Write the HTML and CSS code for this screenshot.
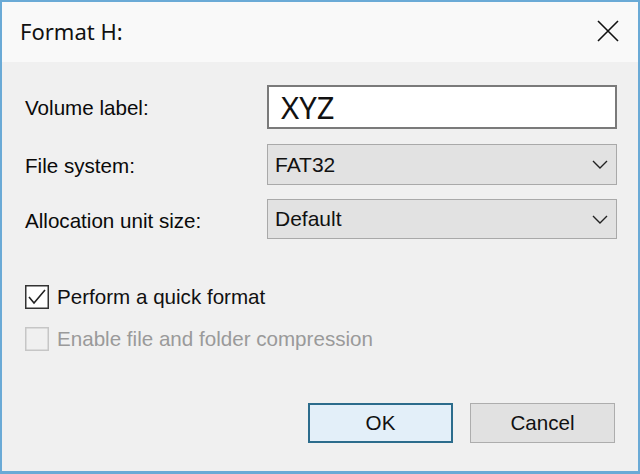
FILE: index.html
```html
<!DOCTYPE html>
<html lang="en">
<head>
    <meta charset="UTF-8">
    <title>Format H:</title>
    <link rel="stylesheet" href="styles.css">
</head>
<body>
    <div class="window">
        <div class="titlebar">
            <div class="title">Format H:</div>
            <svg class="close" width="22" height="22" viewBox="0 0 22 22">
                <path d="M1 1 L21 21 M21 1 L1 21" stroke="#111" stroke-width="1.6" fill="none"/>
            </svg>
        </div>

        <div class="content">
            <div class="fields">
                <div class="label">Volume label:</div>
                <div class="input">XYZ</div>

                <div class="label">File system:</div>
                <div class="select">
                    <span>FAT32</span>
                    <svg width="16" height="9" viewBox="0 0 16 9"><path d="M1 1 L8 8 L15 1" stroke="#222" stroke-width="1.4" fill="none"/></svg>
                </div>

                <div class="label">Allocation unit size:</div>
                <div class="select">
                    <span>Default</span>
                    <svg width="16" height="9" viewBox="0 0 16 9"><path d="M1 1 L8 8 L15 1" stroke="#222" stroke-width="1.4" fill="none"/></svg>
                </div>
            </div>

            <div class="checks">
                <div class="check">
                    <svg class="box" width="24" height="24" viewBox="0 0 24 24">
                        <rect x="0.75" y="0.75" width="22.5" height="22.5" fill="#fff" stroke="#333" stroke-width="1.5"/>
                        <path d="M4 12 L9 18 L20 5" stroke="#222" stroke-width="1.6" fill="none"/>
                    </svg>
                    <span>Perform a quick format</span>
                </div>
                <div class="check disabled">
                    <svg class="box" width="24" height="24" viewBox="0 0 24 24">
                        <rect x="0.75" y="0.75" width="22.5" height="22.5" fill="#f0f0f0" stroke="#c6c6c6" stroke-width="1.5"/>
                    </svg>
                    <span>Enable file and folder compression</span>
                </div>
            </div>

            <div class="buttons">
                <button class="btn default">OK</button>
                <button class="btn">Cancel</button>
            </div>
        </div>
    </div>
</body>
</html>
```

FILE: styles.css
```css
* {
    box-sizing: border-box;
}

body {
    margin: 0;
    background: #f0f0f0;
    font-family: "Liberation Sans", Arial, sans-serif;
    color: #111;
}

.window {
    width: 640px;
    height: 474px;
    display: flex;
    flex-direction: column;
    border: 2px solid #6aaad6;
    border-bottom-width: 3px;
    background: #f0f0f0;
}

.titlebar {
    height: 60px;
    display: flex;
    align-items: center;
    justify-content: space-between;
    padding: 0 19px 2px 18px;
    background: #f9f9f9;
}

.title {
    font-family: "Noto Sans", sans-serif;
    font-size: 22px;
    color: #111;
}

.content {
    flex: 1;
    display: flex;
    flex-direction: column;
    padding: 23px 21px 0 23px;
}

.fields {
    display: grid;
    grid-template-columns: 242px 350px;
    grid-template-rows: 44px 41px 40px;
    row-gap: 15px;
    align-items: center;
    font-size: 20.6px;
}

.fields .select:last-child {
    margin-top: -2px;
}

.label {
    padding-top: 2px;
    color: #0a0a0a;
}

.input {
    height: 44px;
    border: 2px solid #7a7a7a;
    background: #fff;
    display: flex;
    align-items: center;
    padding-left: 12px;
    font-family: "Noto Sans", sans-serif;
    font-size: 31px;
    color: #111;
}

.select {
    height: 100%;
    border: 1.5px solid #a9a9a9;
    background: #e2e2e2;
    display: flex;
    align-items: center;
    justify-content: space-between;
    padding: 0 8px 0 7px;
    font-size: 21px;
}

.checks {
    margin-top: 45px;
    display: flex;
    flex-direction: column;
    gap: 18px;
    font-size: 20.6px;
}

.check {
    display: flex;
    align-items: center;
    gap: 8px;
    height: 24px;
}

.check.disabled {
    color: #9a9a9a;
}

.buttons {
    margin-top: 52px;
    margin-right: 2px;
    display: flex;
    justify-content: flex-end;
    gap: 17px;
}

.btn {
    width: 145px;
    height: 40px;
    font-family: "Liberation Sans", Arial, sans-serif;
    font-size: 20.6px;
    color: #111;
    background: #e1e1e1;
    border: 1.5px solid #adadad;
    padding: 0;
}

.btn.default {
    background: #e3eff9;
    border: 2px solid #2c6c8c;
}
```
